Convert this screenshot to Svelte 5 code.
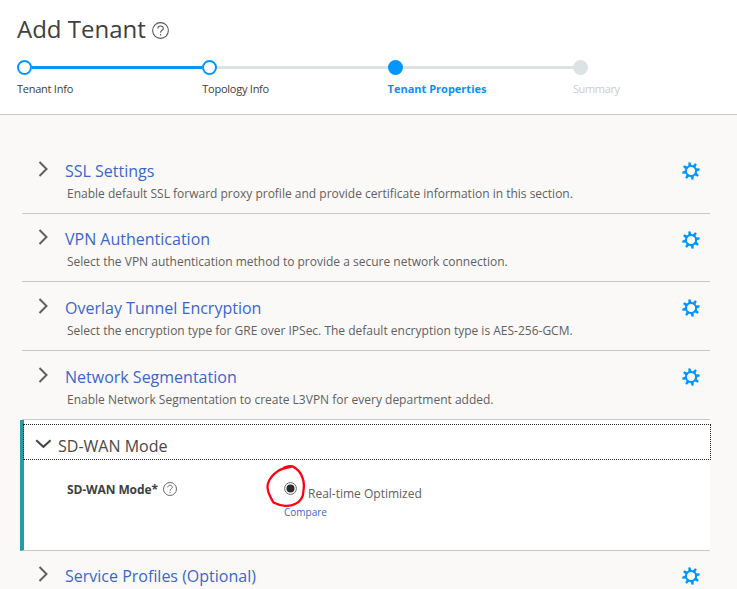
<script>
  const steps = [
    { label: 'Tenant Info', state: 'done' },
    { label: 'Topology Info', state: 'visited' },
    { label: 'Tenant Properties', state: 'current' },
    { label: 'Summary', state: 'pending' }
  ];
  const sections = [
    { title: 'SSL Settings', text: 'Enable default SSL forward proxy profile and provide certificate information in this section.' },
    { title: 'VPN Authentication', text: 'Select the VPN authentication method to provide a secure network connection.', tight: true },
    { title: 'Overlay Tunnel Encryption', text: 'Select the encryption type for GRE over IPSec. The default encryption type is AES-256-GCM.' },
    { title: 'Network Segmentation', text: 'Enable Network Segmentation to create L3VPN for every department added.' }
  ];
  const teeth = [0, 1, 2, 3, 4, 5, 6, 7].map((i) => i * 45 - 11);
</script>

{#snippet help(size)}
  <svg class="help" width={size} height={size} viewBox="0 0 16 16">
    <circle cx="8" cy="8" r="7.4" />
    <path d="M5.5 6.2C5.5 2.9 10.6 2.9 10.6 6C10.6 7.8 8.1 7.8 8.1 10M8.1 11.2V12.6" />
  </svg>
{/snippet}

{#snippet gear()}
  <svg class="gear" width="18" height="18" viewBox="0 0 18 18">
    <circle cx="9" cy="9" r="5.1" />
    {#each teeth as angle}
      <path d="M7.2 4.8L8 .2H10L10.8 4.8Z" transform="rotate({angle} 9 9)" />
    {/each}
  </svg>
{/snippet}

{#snippet row(item)}
  <section class="row" class:tight={item.tight} class:last={item.last}>
    <svg class="chevron" width="11" height="18" viewBox="0 0 11 18"><path d="M1.5 2L8.5 9L1.5 16" /></svg>
    <div class="copy">
      <h2>{item.title}</h2>
      {#if item.text}<p>{item.text}</p>{/if}
    </div>
    {@render gear()}
  </section>
{/snippet}

<div class="page">
  <header>
    <div class="heading"><h1>Add Tenant</h1>{@render help(17)}</div>
    <ol>
      {#each steps as step}
        <li class={step.state}>
          <div class="track"><i class="dot"></i><i class="line"></i></div>
          <span>{step.label}</span>
        </li>
      {/each}
    </ol>
  </header>
  <main>
    {#each sections as item}{@render row(item)}{/each}
    <section class="open">
      <div class="bar">
        <svg class="chevron" width="17" height="10" viewBox="0 0 17 10"><path d="M1.2 1.2L8.4 7.8L15.6 1.2" /></svg>
        <h2>SD-WAN Mode</h2>
      </div>
      <div class="field">
        <div class="label"><b>SD-WAN Mode*</b>{@render help(14)}</div>
        <div class="option">
          <div class="choice">
            <svg class="radio" width="13" height="13" viewBox="0 0 13 13"><circle cx="6.5" cy="6.5" r="5.9" /><circle class="pip" cx="6.5" cy="6.5" r="4" /></svg>
            <span class="name">Real-time Optimized</span>
          </div>
          <a href="#compare">Compare</a>
          <svg class="mark" width="42" height="44" viewBox="0 0 42 44">
            <path d="M24.5 2L17.5 3.6C17 2.4 22 .8 26.5 1.4C31 3.5 35 8 36.5 13C38.5 17 38 22 37.4 26C37.5 32 34 37.5 29 39C24 42 15 41.5 7.5 37.5C5 33.5 1.5 28 1.5 22C1.5 15 8.5 6.5 17 3.6" />
          </svg>
        </div>
      </div>
    </section>
    {@render row({ title: 'Service Profiles (Optional)', tight: true, last: true })}
  </main>
</div>

<style>
  :global(body) { margin: 0; overflow: hidden; }
  .page { width: 737px; height: 589px; overflow: hidden; background: #faf9f8; color: #404040; font-family: "Open Sans", sans-serif; }
  h1, h2, p, ol { margin: 0; padding: 0; font-weight: 400; }
  header { box-sizing: border-box; height: 115px; padding: 11px 0 0 17px; background: #fff; border-bottom: 1px solid #c8c8c8; }
  .heading { display: flex; align-items: center; gap: 6px; height: 35px; }
  .heading :global(.help) { margin-top: 3px; }
  h1 { font-size: 24px; line-height: 35px; }
  .help { flex: none; fill: none; stroke: #555; stroke-width: 1; }
  ol { display: flex; margin-top: 14px; list-style: none; }
  li { width: 185.3px; flex: none; font-size: 11px; line-height: 16px; letter-spacing: -.25px; }
  .track { display: flex; align-items: center; height: 15px; }
  .dot { box-sizing: border-box; width: 15px; height: 15px; border: 2px solid #0096ff; border-radius: 50%; background: #fff; }
  .line { flex: 1; height: 3px; background: #dce3e5; }
  .done .line { background: #0096ff; }
  .current .dot { background: #0096ff; }
  .current span { color: #0a8fff; font-weight: 700; letter-spacing: 0; }
  .pending .dot { background: #dce3e5; border-color: #dce3e5; }
  .pending .line { visibility: hidden; }
  .pending span { color: #ccc; letter-spacing: -.35px; }
  li > span { display: block; margin-top: 6px; }
  main { width: 690px; padding: 30px 0 0 20px; }
  .row { box-sizing: border-box; display: flex; align-items: flex-start; height: 69px; margin-left: 2px; padding: 14px 10px 0 15px; border-bottom: 1px solid #c8c8c8; }
  .row.tight { height: 68px; padding-top: 13px; }
  .chevron { flex: none; fill: none; stroke: #606060; stroke-width: 2; }
  .row > .chevron { margin: 1px 17px 0 1px; }
  .copy { flex: 1; margin-left: -1px; }
  h2 { font-size: 16px; line-height: 24px; color: #3b66cc; }
  .copy p { margin: 1px 0 0 2px; font-size: 12px; line-height: 19px; color: #606060; white-space: nowrap; }
  .gear { margin-top: 3px; fill: #0096ff; }
  .row.tight > .gear { margin-top: 4px; }
  .row.last > .gear { margin-top: 3px; }
  .gear circle { fill: none; stroke: #0096ff; stroke-width: 2; }
  .open { box-sizing: border-box; height: 131px; padding-top: 4px; background: #fff; border-left: 4px solid #219ca6; border-bottom: 1px solid #c8c8c8; }
  .bar { box-sizing: border-box; display: flex; align-items: flex-start; height: 36px; margin: 0 -1px 0 -1px; padding: 9px 0 0 11px; border: 1px dotted #222; }
  .bar .chevron { margin: 5px 6px 0 0; stroke: #444; }
  .bar h2 { color: #484848; }
  .field { display: flex; align-items: flex-start; padding: 20px 0 0 43px; }
  .label { display: flex; align-items: center; gap: 5px; width: 217px; height: 20px; margin-top: -1px; font-size: 12px; letter-spacing: -.1px; }
  .option { position: relative; font-size: 12px; line-height: 18px; color: #606060; }
  .choice { display: flex; align-items: flex-start; gap: 11px; }
  .radio { flex: none; margin-top: 2px; fill: #fff; stroke: #666; stroke-width: 1; }
  .radio .pip { fill: #2b2b2b; stroke: none; }
  .name { margin-top: 5px; }
  .option a { display: block; margin-top: 2px; font-size: 10px; line-height: 14px; color: #3b66cc; text-decoration: none; }
  .mark { position: absolute; left: -18px; top: -15px; fill: none; stroke: #ff0014; stroke-width: 2.3; stroke-linecap: round; stroke-linejoin: round; }
</style>
